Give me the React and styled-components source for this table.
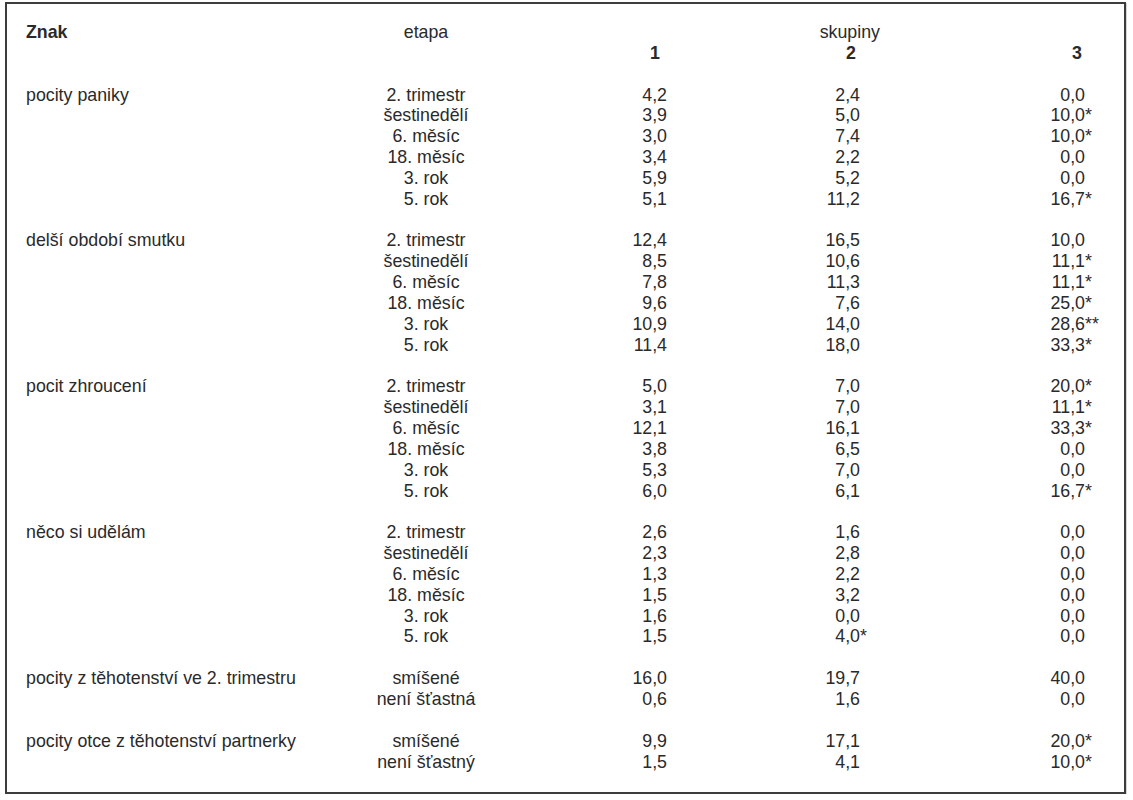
import React from "react";
import styled, { createGlobalStyle } from "styled-components";

const GlobalStyle = createGlobalStyle`
    html, body {
        margin: 0;
        padding: 0;
        background: #ffffff;
    }
    body {
        font-family: "Liberation Sans", Arial, Helvetica, sans-serif;
        color: #2a2a2a;
    }
`;

const groups = [
    {
        label: "pocity paniky",
        rows: [
            ["2. trimestr", "4,2", "2,4", "0,0"],
            ["šestinedělí", "3,9", "5,0", "10,0*"],
            ["6. měsíc", "3,0", "7,4", "10,0*"],
            ["18. měsíc", "3,4", "2,2", "0,0"],
            ["3. rok", "5,9", "5,2", "0,0"],
            ["5. rok", "5,1", "11,2", "16,7*"],
        ],
    },
    {
        label: "delší období smutku",
        rows: [
            ["2. trimestr", "12,4", "16,5", "10,0"],
            ["šestinedělí", "8,5", "10,6", "11,1*"],
            ["6. měsíc", "7,8", "11,3", "11,1*"],
            ["18. měsíc", "9,6", "7,6", "25,0*"],
            ["3. rok", "10,9", "14,0", "28,6**"],
            ["5. rok", "11,4", "18,0", "33,3*"],
        ],
    },
    {
        label: "pocit zhroucení",
        rows: [
            ["2. trimestr", "5,0", "7,0", "20,0*"],
            ["šestinedělí", "3,1", "7,0", "11,1*"],
            ["6. měsíc", "12,1", "16,1", "33,3*"],
            ["18. měsíc", "3,8", "6,5", "0,0"],
            ["3. rok", "5,3", "7,0", "0,0"],
            ["5. rok", "6,0", "6,1", "16,7*"],
        ],
    },
    {
        label: "něco si udělám",
        rows: [
            ["2. trimestr", "2,6", "1,6", "0,0"],
            ["šestinedělí", "2,3", "2,8", "0,0"],
            ["6. měsíc", "1,3", "2,2", "0,0"],
            ["18. měsíc", "1,5", "3,2", "0,0"],
            ["3. rok", "1,6", "0,0", "0,0"],
            ["5. rok", "1,5", "4,0*", "0,0"],
        ],
    },
    {
        label: "pocity z těhotenství ve 2. trimestru",
        rows: [
            ["smíšené", "16,0", "19,7", "40,0"],
            ["není šťastná", "0,6", "1,6", "0,0"],
        ],
    },
    {
        label: "pocity otce z těhotenství partnerky",
        rows: [
            ["smíšené", "9,9", "17,1", "20,0*"],
            ["není šťastný", "1,5", "4,1", "10,0*"],
        ],
    },
];

// split "10,0**" into the number and its hanging stars
const Value = ({ text }) => {
    const m = text.match(/^([^*]*)(\*+)?$/);
    return (
        <>
            {m[1]}
            {m[2] && <Stars>{m[2]}</Stars>}
        </>
    );
};

const App = () => {
    return (
        <>
            <GlobalStyle />
            <Frame>
                <Head>
                    <Row>
                        <HeadLabel>Znak</HeadLabel>
                        <Stage>etapa</Stage>
                        <span />
                        <GroupTitle>skupiny</GroupTitle>
                        <span />
                    </Row>
                    <Row>
                        <span />
                        <span />
                        <ColNo $pad={7}>1</ColNo>
                        <ColNo $pad={4}>2</ColNo>
                        <ColNo $pad={3}>3</ColNo>
                    </Row>
                </Head>
                {groups.map((g) => (
                    <Group key={g.label}>
                        {g.rows.map((r, i) => (
                            <Row key={r[0]}>
                                <Label>{i === 0 ? g.label : ""}</Label>
                                <Stage>{r[0]}</Stage>
                                <Num>
                                    <Value text={r[1]} />
                                </Num>
                                <Num>
                                    <Value text={r[2]} />
                                </Num>
                                <Num>
                                    <Value text={r[3]} />
                                </Num>
                            </Row>
                        ))}
                    </Group>
                ))}
            </Frame>
        </>
    );
};

const Frame = styled.div`
    box-sizing: border-box;
    margin: 2px 0 0 5px;
    width: 1121px;
    height: 792px;
    border: 2px solid #3c3c3c;
    box-shadow: 1px 1px 0 #d6d6d6;
    padding: 18px 0 0 19px;
    font-size: 17.8px;
    line-height: 20.85px;
`;

const Head = styled.div`
    margin-bottom: 20.85px;
`;

const Row = styled.div`
    display: grid;
    grid-template-columns: 314px 172px 155px 193px 225px;
    height: 20.85px;
    white-space: nowrap;
`;

const Group = styled.div`
    margin-bottom: 20.85px;
`;

const Label = styled.div`
    text-align: left;
`;

const HeadLabel = styled(Label)`
    font-weight: bold;
`;

const Stage = styled.div`
    text-align: center;
`;

const GroupTitle = styled.div`
    text-align: right;
    margin-right: -20px;
`;

const ColNo = styled.div`
    text-align: right;
    font-weight: bold;
    padding-right: ${(p) => p.$pad}px;
`;

const Num = styled.div`
    text-align: right;
`;

const Stars = styled.span`
    display: inline-block;
    width: 0;
    text-align: left;
`;

export default App;
